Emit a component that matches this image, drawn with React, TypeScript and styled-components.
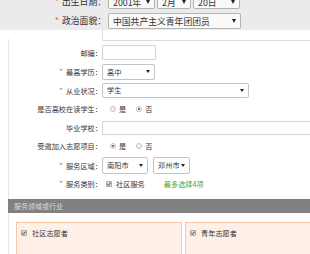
import React from 'react'
import styled, { createGlobalStyle } from 'styled-components'

const GlobalStyle = createGlobalStyle`
    html, body {
        margin: 0;
        padding: 0;
        background: #fff;
    }
    body {
        font-family: "Noto Sans CJK SC", "Noto Sans", sans-serif;
        color: #333;
    }
`

const Page = styled.div`
    width: 310px;
    height: 254px;
    overflow: hidden;
    background: #fff;
`

const Header = styled.div`
    height: 30px;
    background: #ebebeb;
    overflow: hidden;
`

const HeaderInner = styled.div`
    margin-top: -5px;
    display: flex;
    flex-direction: column;
    gap: 4px;
`

const HeaderRow = styled.div<{ $h?: number }>`
    display: flex;
    align-items: center;
    height: ${(p) => p.$h ?? 16}px;
`

const HeaderLabel = styled.div`
    width: 106px;
    flex-shrink: 0;
    margin-right: 2px;
    text-align: right;
    font-size: 8.8px;
    line-height: 14px;
    white-space: nowrap;
    color: #333;
`

const Star = styled.span<{ $size?: number }>`
    color: #f25c5c;
    font-size: ${(p) => p.$size ?? 8}px;
    margin-right: 3px;
`

const Select = styled.div<{ $w: number; $h?: number; $size?: number; $gap?: number; $bg?: string; $line?: string }>`
    box-sizing: border-box;
    width: ${(p) => p.$w}px;
    height: ${(p) => p.$h ?? 16}px;
    flex-shrink: 0;
    margin-right: ${(p) => p.$gap ?? 0}px;
    border: 1px solid ${(p) => p.$line ?? '#c4c4c4'};
    border-radius: 2px;
    background: ${(p) => p.$bg ?? '#fff'};
    display: flex;
    align-items: center;
    justify-content: space-between;
    padding: 0 4px 0 4px;
    font-size: ${(p) => p.$size ?? 7.2}px;
    white-space: nowrap;
    color: #333;
`

const Arrow = styled.span<{ $big?: boolean }>`
    width: 0;
    height: 0;
    border-left: ${(p) => (p.$big ? 2.5 : 2)}px solid transparent;
    border-right: ${(p) => (p.$big ? 2.5 : 2)}px solid transparent;
    border-top: ${(p) => (p.$big ? 4 : 3)}px solid #222;
`

/* bottom of the address input, mostly hidden under the header */
const TailInput = styled.div`
    height: 10px;
    margin-left: 102px;
    border-left: 1px solid #dcdcdc;
    border-bottom: 1px solid #dcdcdc;
`

const Form = styled.div`
    margin-top: -2px;
    margin-left: 8px;
    padding-top: 4.65px;
    border-left: 1px solid #e6e6e6;
    display: flex;
    flex-direction: column;
`

const Row = styled.div`
    height: 18.7px;
    display: flex;
    align-items: center;
`

const Label = styled.div`
    width: 93px;
    flex-shrink: 0;
    text-align: right;
    font-size: 7.2px;
    white-space: nowrap;
    color: #333;
`

const TextInput = styled.div<{ $w?: number; $h?: number }>`
    box-sizing: border-box;
    width: ${(p) => (p.$w ? `${p.$w}px` : '260px')};
    height: ${(p) => p.$h ?? 15}px;
    flex-shrink: 0;
    border: 1px solid #d4d4d4;
    border-radius: 1px;
    background: #fff;
`

const Choices = styled.div<{ $pad?: number }>`
    display: flex;
    align-items: center;
    padding-left: ${(p) => p.$pad ?? 8}px;
    font-size: 7.2px;
    white-space: nowrap;
`

const RadioDot = styled.span<{ $on?: boolean }>`
    box-sizing: border-box;
    width: 6px;
    height: 6px;
    border-radius: 50%;
    border: 1px solid #c2c2c2;
    background: #f3f3f3;
    display: inline-flex;
    align-items: center;
    justify-content: center;
    margin-right: 3px;

    &::after {
        content: '';
        display: ${(p) => (p.$on ? 'block' : 'none')};
        width: 2px;
        height: 2px;
        border-radius: 50%;
        background: #555;
    }
`

const ChoiceText = styled.span<{ $gap?: number }>`
    margin-right: ${(p) => p.$gap ?? 10}px;
`

const Box = styled.span`
    box-sizing: border-box;
    width: 6px;
    height: 6px;
    border: 1px solid #a8a8a8;
    border-radius: 1px;
    background: #dcdcdc;
    display: inline-flex;
    align-items: center;
    justify-content: center;
    margin-right: 4px;
    flex-shrink: 0;
`

const Hint = styled.span`
    margin-left: 19px;
    color: #3fa63f;
    font-size: 7.2px;
`

const SectionBar = styled.div`
    margin-top: 5.75px;
    margin-left: -1px;
    height: 14px;
    background: #818181;
    color: #dedede;
    font-size: 7px;
    display: flex;
    align-items: center;
    padding-left: 6px;
`

const Cards = styled.div`
    margin-top: 9px;
    padding-left: 7px;
    display: flex;
    gap: 3px;
`

const Card = styled.div<{ $w: number }>`
    box-sizing: border-box;
    width: ${(p) => p.$w}px;
    flex-shrink: 0;
    height: 50px;
    border: 1.5px solid #f9c7a3;
    background: #fff0e7;
    display: flex;
    align-items: flex-start;
    padding: 7px 0 0 3.5px;
    font-size: 7.2px;
    color: #333;
`

const CardText = styled.span`
    margin-left: 1.5px;
    line-height: 9px;
    margin-top: -1px;
`

function Check() {
    return (
        <Box>
            <svg width="4" height="4" viewBox="0 0 4 4">
                <path d="M0.4 2.1 L1.5 3.2 L3.6 0.7" fill="none" stroke="#222" strokeWidth="0.9" />
            </svg>
        </Box>
    )
}

export default function App() {
    return (
        <Page>
            <GlobalStyle />
            <Header>
                <HeaderInner>
                    <HeaderRow $h={14}>
                        <HeaderLabel>
                            <Star $size={9}>*</Star>出生日期：
                        </HeaderLabel>
                        <Select $w={47} $h={14} $gap={2} $size={8.8} $bg="#f9f9f9" $line="#b3b3b3">
                            2001年<Arrow $big />
                        </Select>
                        <Select $w={34} $h={14} $gap={2} $size={8.8} $bg="#f9f9f9" $line="#b3b3b3">
                            2月<Arrow $big />
                        </Select>
                        <Select $w={47} $h={14} $size={8.8} $bg="#f9f9f9" $line="#b3b3b3">
                            20日<Arrow $big />
                        </Select>
                    </HeaderRow>
                    <HeaderRow>
                        <HeaderLabel>
                            <Star $size={9}>*</Star>政治面貌：
                        </HeaderLabel>
                        <Select $w={133} $size={8.8} $bg="#f9f9f9" $line="#b3b3b3">
                            中国共产主义青年团团员<Arrow $big />
                        </Select>
                    </HeaderRow>
                </HeaderInner>
            </Header>

            <TailInput />

            <Form>
                <Row>
                    <Label>邮编：</Label>
                    <TextInput $w={54} $h={15} />
                </Row>
                <Row>
                    <Label>
                        <Star>*</Star>最高学历：
                    </Label>
                    <Select $w={53} $h={16}>
                        高中<Arrow />
                    </Select>
                </Row>
                <Row>
                    <Label>
                        <Star>*</Star>从业状况：
                    </Label>
                    <Select $w={147} $h={15}>
                        学生<Arrow />
                    </Select>
                </Row>
                <Row>
                    <Label>是否高校在读学生：</Label>
                    <Choices>
                        <RadioDot />
                        <ChoiceText>是</ChoiceText>
                        <RadioDot $on />
                        <ChoiceText>否</ChoiceText>
                    </Choices>
                </Row>
                <Row>
                    <Label>毕业学校：</Label>
                    <TextInput $h={14} />
                </Row>
                <Row>
                    <Label>受邀加入志愿项目：</Label>
                    <Choices>
                        <RadioDot $on />
                        <ChoiceText>是</ChoiceText>
                        <RadioDot />
                        <ChoiceText>否</ChoiceText>
                    </Choices>
                </Row>
                <Row>
                    <Label>
                        <Star>*</Star>服务区域：
                    </Label>
                    <Select $w={46} $h={17} $gap={5}>
                        南阳市<Arrow />
                    </Select>
                    <Select $w={37} $h={17}>
                        邓州市<Arrow />
                    </Select>
                </Row>
                <Row>
                    <Label>
                        <Star>*</Star>服务类别：
                    </Label>
                    <Choices $pad={4}>
                        <Check />
                        社区服务
                        <Hint>最多选择4项</Hint>
                    </Choices>
                </Row>

                <SectionBar>服务领域或行业</SectionBar>

                <Cards>
                    <Card $w={166}>
                        <Check />
                        <CardText>社区志愿者</CardText>
                    </Card>
                    <Card $w={166}>
                        <Check />
                        <CardText>青年志愿者</CardText>
                    </Card>
                </Cards>
            </Form>
        </Page>
    )
}
